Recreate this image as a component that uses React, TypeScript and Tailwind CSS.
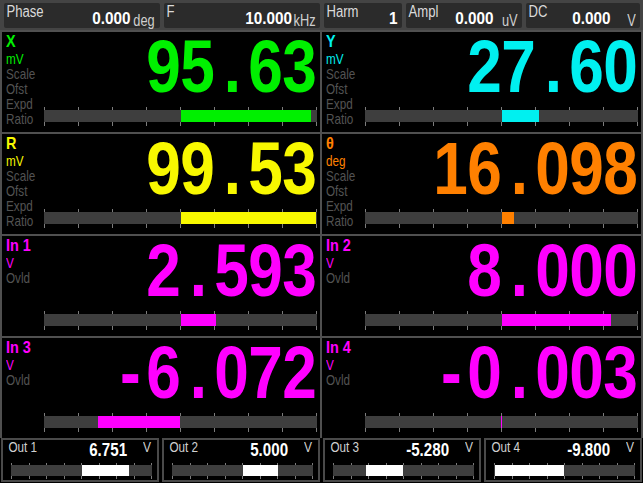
const SANS = "font-['Liberation_Sans',Arial,sans-serif]";

type BarProps = {
  width: number;
  value: number;
  range: number;
  wrapClass: string;
  barClass: string;
  fillClass: string;
};

function Bar({ width, value, range, wrapClass, barClass, fillClass }: BarProps) {
  const half = width / 2;
  const span = Math.max(1, (Math.abs(value) / range) * half);
  const left = value >= 0 ? half : half - span;
  const ticks = Array.from({ length: 9 }, (_, i) => Math.round((i * (width - 1)) / 8));

  return (
    <div className={"relative " + wrapClass}>
      {ticks.map((t) => (
        <span key={t} className="absolute top-0 bottom-0 w-px bg-[#7c7c7c]" style={{ left: t }} />
      ))}
      <div className={"relative bg-[#3e3e3e] " + barClass}>
        <div className={"absolute top-0 bottom-0 " + fillClass} style={{ left, width: span }} />
      </div>
    </div>
  );
}

function Digits({ text, colorClass }: { text: string; colorClass: string }) {
  return (
    <div className={`flex mt-[-2px] h-[74px] text-[74px] leading-[74px] font-bold ${SANS} ${colorClass}`}>
      {text.split("").map((c, i) => (
        <span key={i} className="w-[34px] flex justify-center">
          <span className="inline-block scale-x-[0.84]">{c}</span>
        </span>
      ))}
    </div>
  );
}

type PanelProps = {
  name: string;
  unit: string;
  rows: string[];
  value: string;
  num: number;
  range: number;
  textClass: string;
  fillClass: string;
};

function Panel({ name, unit, rows, value, num, range, textClass, fillClass }: PanelProps) {
  return (
    <div className={`bg-black flex h-[100px] ${SANS}`}>
      <div className="w-[42px] shrink-0 pl-[4px] pt-[1px]">
        <div className={`origin-left scale-x-[0.85] text-[17px] leading-[18px] font-bold whitespace-nowrap ${textClass}`}>{name}</div>
        <div className={`origin-left scale-x-[0.78] text-[15px] leading-[15px] ${textClass}`}>{unit}</div>
        {rows.map((r) => (
          <div key={r} className="origin-left scale-x-[0.78] text-[15px] leading-[15px] text-[#535353]">
            {r}
          </div>
        ))}
      </div>
      <div className="flex-1 flex flex-col items-end pr-[3px]">
        <Digits text={value} colorClass={textClass} />
        <div className="mt-[3px]">
          <Bar
            width={273}
            value={num}
            range={range}
            wrapClass="w-[273px] pt-[3px] pb-[4px]"
            barClass="h-[12px]"
            fillClass={fillClass}
          />
        </div>
      </div>
    </div>
  );
}

function TopBox({ label, value, unit, className, unitClass }: { label: string; value: string; unit: string; className: string; unitClass: string }) {
  return (
    <div className={`bg-[#2b2b2b] rounded-[2px] h-[25px] flex items-end ${SANS} ${className}`}>
      <span className="self-start pl-[3px] pt-[1px] inline-block origin-left scale-x-[0.82] text-[16px] leading-[15px] text-[#dadada]">
        {label}
      </span>
      <span className="flex-1" />
      <span className="inline-block origin-right scale-x-[0.9] text-[17px] leading-[18px] font-bold text-white">{value}</span>
      <span className={`flex justify-end ${unitClass}`}>
        <span className="inline-block origin-right scale-x-[0.8] text-[16px] leading-[15px] text-[#cfcfcf]">{unit}</span>
      </span>
    </div>
  );
}

function OutBox({ label, value, num }: { label: string; value: string; num: number }) {
  return (
    <div className={`flex-1 h-[44px] border-2 border-[#4a4a4a] bg-black ${SANS}`}>
      <div className="flex items-start h-[21px]">
        <span className="pl-[7px] inline-block origin-left scale-x-[0.78] text-[15px] leading-[14px] text-[#d0d0d0] whitespace-nowrap">
          {label}
        </span>
        <span className="flex-1" />
        <span className="mt-[1px] inline-block origin-right scale-x-[0.84] text-[18px] leading-[18px] font-bold text-white">{value}</span>
        <span className="w-[30px] pr-[6px] flex justify-end">
          <span className="inline-block origin-right scale-x-[0.8] text-[15px] leading-[14px] text-[#d0d0d0]">V</span>
        </span>
      </div>
      <div className="pl-[8px] pt-[2px]">
        <Bar
          width={141}
          value={num}
          range={10}
          wrapClass="w-[141px] pt-[2px] pb-[3px]"
          barClass="h-[11px]"
          fillClass="bg-white"
        />
      </div>
    </div>
  );
}

const SCALE_ROWS = ["Scale", "Ofst", "Expd", "Ratio"];

export default function App() {
  return (
    <div className="w-[643px] h-[483px] bg-black overflow-hidden flex flex-col">
      <div className="h-[30px] shrink-0 bg-[#444444] flex gap-[4px] pl-[4px] pt-[3px]">
        <TopBox label="Phase" value="0.000" unit="deg" className="w-[156px]" unitClass="w-[29px] pr-[5px]" />
        <TopBox label="F" value="10.000" unit="kHz" className="w-[156px]" unitClass="w-[28px] pr-[4px]" />
        <TopBox label="Harm" value="1" unit="" className="w-[78px]" unitClass="w-[5px]" />
        <TopBox label="Ampl" value="0.000" unit="uV" className="w-[116px]" unitClass="w-[28px] pr-[4px]" />
        <TopBox label="DC" value="0.000" unit="V" className="w-[114px]" unitClass="w-[29px] pr-[4px]" />
      </div>

      <div className="grid grid-cols-[318px_319px] grid-rows-[repeat(4,100px)] gap-[2px] p-[2px] pb-0 bg-[#505050] shrink-0">
        <Panel name="X" unit="mV" rows={SCALE_ROWS} value="95.63" num={95.63} range={100} textClass="text-[#00f000]" fillClass="bg-[#00f000]" />
        <Panel name="Y" unit="mV" rows={SCALE_ROWS} value="27.60" num={27.6} range={100} textClass="text-[#00f0f0]" fillClass="bg-[#00f0f0]" />
        <Panel name="R" unit="mV" rows={SCALE_ROWS} value="99.53" num={99.53} range={100} textClass="text-[#f8f800]" fillClass="bg-[#f8f800]" />
        <Panel name="θ" unit="deg" rows={SCALE_ROWS} value="16.098" num={16.098} range={180} textClass="text-[#ff8000]" fillClass="bg-[#ff8000]" />
        <Panel name="In 1" unit="V" rows={["Ovld"]} value="2.593" num={2.593} range={10} textClass="text-[#ff00ff]" fillClass="bg-[#ff00ff]" />
        <Panel name="In 2" unit="V" rows={["Ovld"]} value="8.000" num={8} range={10} textClass="text-[#ff00ff]" fillClass="bg-[#ff00ff]" />
        <Panel name="In 3" unit="V" rows={["Ovld"]} value="-6.072" num={-6.072} range={10} textClass="text-[#ff00ff]" fillClass="bg-[#ff00ff]" />
        <Panel name="In 4" unit="V" rows={["Ovld"]} value="-0.003" num={-0.003} range={10} textClass="text-[#ff00ff]" fillClass="bg-[#ff00ff]" />
      </div>

      <div className="flex gap-[3px] px-[1px]">
        <OutBox label="Out 1" value="6.751" num={6.751} />
        <OutBox label="Out 2" value="5.000" num={5} />
        <OutBox label="Out 3" value="-5.280" num={-5.28} />
        <OutBox label="Out 4" value="-9.800" num={-9.8} />
      </div>
    </div>
  );
}
